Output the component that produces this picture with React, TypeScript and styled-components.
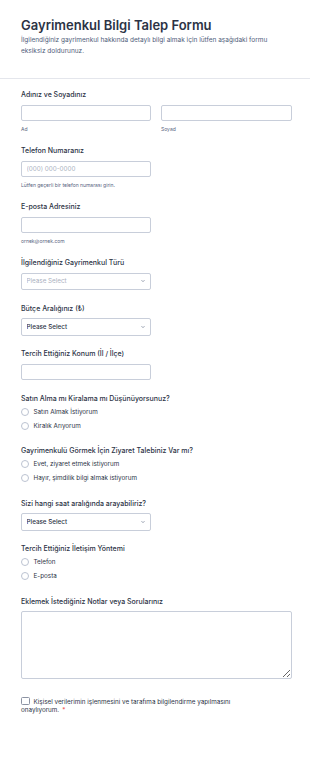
import React from "react";
import styled, { createGlobalStyle } from "styled-components";

const GlobalStyle = createGlobalStyle`
  html, body { margin: 0; padding: 0; background: #ffffff; }
  body { font-family: Inter, "Noto Sans", Arial, sans-serif; color: #2c3345; -webkit-font-smoothing: antialiased; }
  * { box-sizing: border-box; }
`;

const Page = styled.div`
  width: 310px;
  min-height: 784px;
  background: #ffffff;
`;

const Header = styled.header`
  padding: 17px 21px 22px;
  border-bottom: 1px solid #e4e6ec;
`;

const Title = styled.h1`
  margin: 0;
  font-size: 13px;
  line-height: 16px;
  font-weight: 600;
  color: #2c3345;
`;

const Description = styled.p`
  margin: 2px 0 0;
  font-size: 6.5px;
  line-height: 10.5px;
  color: #4f5d7a;
`;

const Form = styled.form`
  display: flex;
  flex-direction: column;
  gap: 13.5px;
  padding: 11px 18px 40px 21px;
`;

const Field = styled.div`
  display: flex;
  flex-direction: column;
`;

const Label = styled.label<{ $tight?: boolean }>`
  display: block;
  font-size: 7px;
  line-height: 10px;
  font-weight: 500;
  color: #2c3345;
  margin-bottom: ${(p) => (p.$tight ? "1px" : "4.5px")};
`;

const NameRow = styled.div`
  display: grid;
  grid-template-columns: 130px 131px;
  column-gap: 10px;
`;

const Stack = styled.div`
  display: flex;
  flex-direction: column;
`;

const TextInput = styled.input<{ $width?: number }>`
  display: block;
  width: ${(p) => (p.$width ? `${p.$width}px` : "100%")};
  height: 16.5px;
  border: 1px solid #c8ceda;
  border-radius: 2px;
  padding: 0 4.5px;
  font-family: inherit;
  font-size: 6.3px;
  color: #2c3345;
  background: #fff;
  outline: none;
  &::placeholder { color: #aab1c0; }
`;

const SubLabel = styled.span`
  display: block;
  margin-top: 3.5px;
  font-size: 5px;
  line-height: 8px;
  color: #57647e;
`;

const SelectWrap = styled.div`
  position: relative;
  width: 130px;
  height: 17.5px;
`;

const Select = styled.select<{ $empty?: boolean }>`
  appearance: none;
  -webkit-appearance: none;
  display: block;
  width: 100%;
  height: 100%;
  margin: 0;
  border: 1px solid #c8ceda;
  border-radius: 2px;
  padding: 0 4.5px;
  font-family: inherit;
  font-size: 6.3px;
  font-weight: ${(p) => (p.$empty ? 400 : 500)};
  color: ${(p) => (p.$empty ? "#aab1c0" : "#2c3345")};
  background: #fff;
  outline: none;
`;

const Chevron = styled.svg`
  position: absolute;
  right: 6px;
  top: 50%;
  width: 4px;
  height: 4px;
  transform: translateY(-50%);
  pointer-events: none;
`;

const RadioList = styled.div`
  display: flex;
  flex-direction: column;
`;

const RadioRow = styled.label`
  display: flex;
  align-items: center;
  height: 14px;
  gap: 4.5px;
  font-size: 6.3px;
  color: #2c3345;
`;

const RadioCircle = styled.span`
  width: 8px;
  height: 8px;
  border-radius: 50%;
  border: 1px solid #bcc3d1;
  background: #fff;
  flex: none;
`;

const TextArea = styled.textarea`
  width: 100%;
  height: 68px;
  margin: 0;
  border: 1px solid #c8ceda;
  border-radius: 2px;
  font-family: inherit;
  font-size: 6.3px;
  background: #fff;
  outline: none;
  display: block;
`;

const Consent = styled.p`
  margin: 4px 0 0;
  font-size: 6.3px;
  line-height: 9px;
  color: #2c3345;
  max-width: 230px;
`;

const CheckBox = styled.span`
  display: inline-block;
  width: 8.5px;
  height: 8.5px;
  border: 1px solid #8c93a3;
  border-radius: 1.5px;
  vertical-align: -2px;
  margin-right: 4px;
  background: #fff;
`;

const Required = styled.span`
  color: #f23a3c;
  padding-left: 3px;
`;

const ChevronIcon = () => (
  <Chevron viewBox="0 0 8 8">
    <path d="M1.5 2.8 L4 5.3 L6.5 2.8" fill="none" stroke="#57647e" strokeWidth="1.2" strokeLinecap="round" strokeLinejoin="round" />
  </Chevron>
);

const SelectField: React.FC<{ label: string; empty?: boolean }> = ({ label, empty }) => (
  <Field>
    <Label>{label}</Label>
    <SelectWrap>
      <Select $empty={empty} defaultValue="">
        <option value="">Please Select</option>
      </Select>
      <ChevronIcon />
    </SelectWrap>
  </Field>
);

const RadioField: React.FC<{ label: string; options: string[] }> = ({ label, options }) => (
  <Field>
    <Label $tight>{label}</Label>
    <RadioList>
      {options.map((o) => (
        <RadioRow key={o}>
          <RadioCircle />
          {o}
        </RadioRow>
      ))}
    </RadioList>
  </Field>
);

export default function App() {
  return (
    <Page>
      <GlobalStyle />
      <Header>
        <Title>Gayrimenkul Bilgi Talep Formu</Title>
        <Description>
          İlgilendiğiniz gayrimenkul hakkında detaylı bilgi almak için lütfen aşağıdaki formu eksiksiz doldurunuz.
        </Description>
      </Header>
      <Form>
        <Field>
          <Label>Adınız ve Soyadınız</Label>
          <NameRow>
            <Stack>
              <TextInput />
              <SubLabel>Ad</SubLabel>
            </Stack>
            <Stack>
              <TextInput />
              <SubLabel>Soyad</SubLabel>
            </Stack>
          </NameRow>
        </Field>
        <Field>
          <Label>Telefon Numaranız</Label>
          <TextInput $width={130} placeholder="(000) 000-0000" />
          <SubLabel>Lütfen geçerli bir telefon numarası girin.</SubLabel>
        </Field>
        <Field>
          <Label>E-posta Adresiniz</Label>
          <TextInput $width={130} />
          <SubLabel>ornek@ornek.com</SubLabel>
        </Field>
        <SelectField label="İlgilendiğiniz Gayrimenkul Türü" empty />
        <SelectField label="Bütçe Aralığınız (₺)" />
        <Field>
          <Label>Tercih Ettiğiniz Konum (İl / İlçe)</Label>
          <TextInput $width={130} />
        </Field>
        <RadioField label="Satın Alma mı Kiralama mı Düşünüyorsunuz?" options={["Satın Almak İstiyorum", "Kiralık Arıyorum"]} />
        <RadioField
          label="Gayrimenkulü Görmek İçin Ziyaret Talebiniz Var mı?"
          options={["Evet, ziyaret etmek istiyorum", "Hayır, şimdilik bilgi almak istiyorum"]}
        />
        <SelectField label="Sizi hangi saat aralığında arayabiliriz?" />
        <RadioField label="Tercih Ettiğiniz İletişim Yöntemi" options={["Telefon", "E-posta"]} />
        <Field>
          <Label>Eklemek İstediğiniz Notlar veya Sorularınız</Label>
          <TextArea />
        </Field>
        <Consent>
          <CheckBox />
          Kişisel verilerimin işlenmesini ve tarafıma bilgilendirme yapılmasını onaylıyorum.
          <Required>*</Required>
        </Consent>
      </Form>
    </Page>
  );
}
